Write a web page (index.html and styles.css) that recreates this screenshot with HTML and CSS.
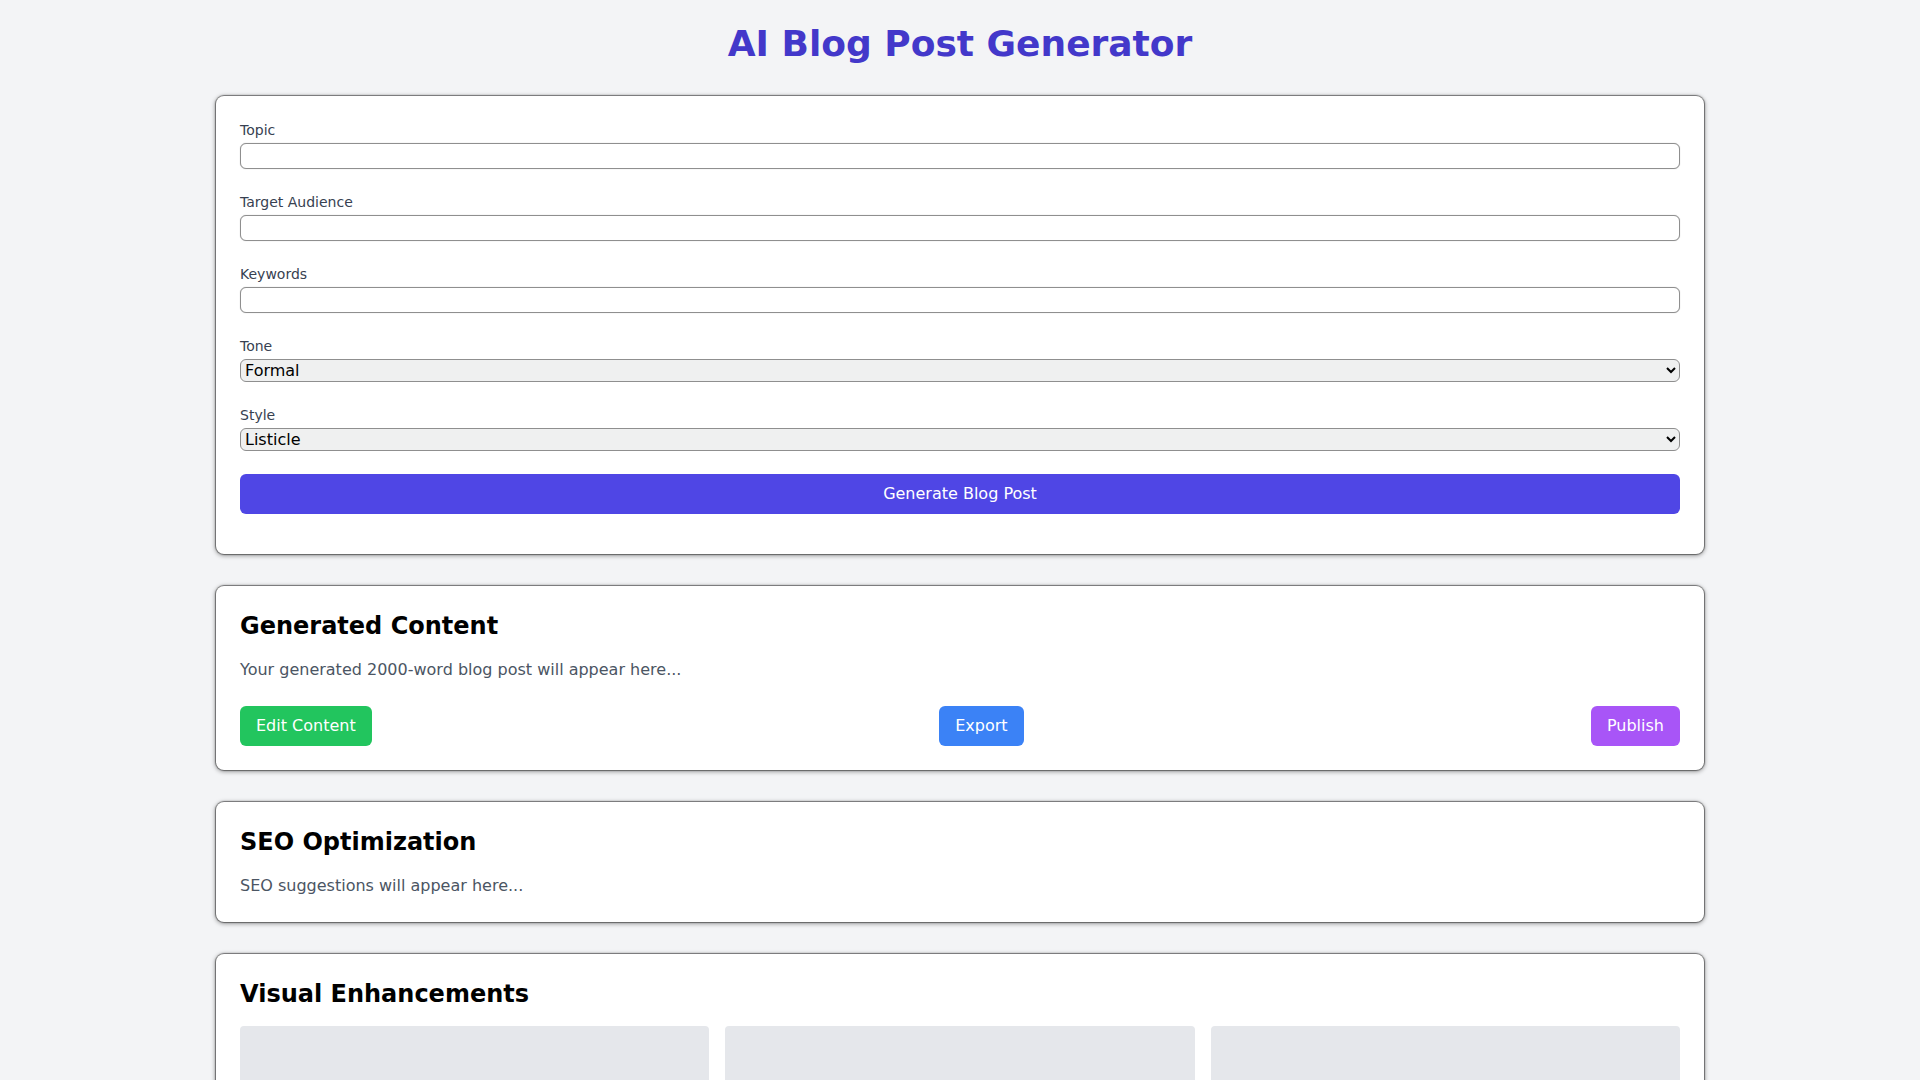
FILE: index.html
```html
<!DOCTYPE html>
<html lang="en">
<head>
<meta charset="utf-8">
<title>AI Blog Post Generator</title>
<link rel="stylesheet" href="styles.css">
</head>
<body>
<main class="container">
  <h1 class="title">AI Blog Post Generator</h1>

  <section class="card form-card">
    <div class="field">
      <label class="label">Topic</label>
      <input class="input" type="text">
    </div>
    <div class="field">
      <label class="label">Target Audience</label>
      <input class="input" type="text">
    </div>
    <div class="field">
      <label class="label">Keywords</label>
      <input class="input" type="text">
    </div>
    <div class="field">
      <label class="label">Tone</label>
      <select class="select"><option>Formal</option><option>Casual</option></select>
    </div>
    <div class="field">
      <label class="label">Style</label>
      <select class="select"><option>Listicle</option><option>How-to</option></select>
    </div>
    <button class="btn btn-primary">Generate Blog Post</button>
  </section>

  <section class="card">
    <h2 class="card-title">Generated Content</h2>
    <p class="muted">Your generated 2000-word blog post will appear here...</p>
    <div class="actions">
      <button class="btn btn-green">Edit Content</button>
      <button class="btn btn-blue">Export</button>
      <button class="btn btn-purple">Publish</button>
    </div>
  </section>

  <section class="card">
    <h2 class="card-title">SEO Optimization</h2>
    <p class="muted no-mb">SEO suggestions will appear here...</p>
  </section>

  <section class="card">
    <h2 class="card-title">Visual Enhancements</h2>
    <div class="tiles">
      <div class="tile"></div>
      <div class="tile"></div>
      <div class="tile"></div>
    </div>
  </section>
</main>
</body>
</html>
```

FILE: styles.css
```css
* { box-sizing: border-box; }

html, body {
  margin: 0;
  padding: 0;
}

body {
  background: #f3f4f6;
  font-family: "DejaVu Sans", sans-serif;
  color: #000;
}

.container {
  max-width: 1536px;
  margin: 0 auto;
  padding: 24px 24px 40px;
}

.title {
  margin: 0 0 32px;
  text-align: center;
  font-size: 36px;
  line-height: 40px;
  font-weight: 700;
  color: #4338ca;
}

.card {
  background: #fff;
  border-radius: 8px;
  padding: 24px;
  margin-bottom: 32px;
  box-shadow: 0 0 1px 1px rgba(0, 0, 0, 0.45), 0 1px 4px 1px rgba(0, 0, 0, 0.35);
}

.form-card {
  padding-bottom: 40px;
}

.field {
  margin-bottom: 23px;
}

.label {
  display: block;
  font-size: 14px;
  line-height: 20px;
  color: #374151;
  margin-bottom: 3px;
}

.input {
  display: block;
  width: 100%;
  height: 26px;
  margin: 0;
  border: 1px solid #8f8f8f;
  border-radius: 6px;
  background: #fff;
  box-shadow: 0 0 1px rgba(0, 0, 0, 0.3);
  font-family: inherit;
  font-size: 16px;
}

.select {
  display: block;
  width: 100%;
  height: 23px;
  margin: 0;
  padding: 0;
  border: 1px solid #8f8f8f;
  border-radius: 6px;
  background-color: #eff0f0;
  color: #000;
  font-family: inherit;
  font-size: 16px;
}

.btn {
  border: none;
  border-radius: 6px;
  height: 40px;
  padding: 0 16px;
  font-family: inherit;
  font-size: 16px;
  line-height: 24px;
  color: #fff;
  cursor: pointer;
}

.btn-primary {
  display: block;
  width: 100%;
  background: #4f46e5;
  margin: 0;
}

.btn-green { background: #22c55e; }
.btn-blue { background: #3b82f6; }
.btn-purple { background: #a855f7; }

.card-title {
  margin: 0 0 16px;
  font-size: 24px;
  line-height: 32px;
  font-weight: 700;
}

.muted {
  margin: 0 0 24px;
  font-size: 16px;
  line-height: 24px;
  color: #4b5563;
}

.muted.no-mb { margin-bottom: 0; }

.actions {
  display: flex;
  justify-content: space-between;
}

.tiles {
  display: grid;
  grid-template-columns: repeat(3, 1fr);
  gap: 16px;
}

.tile {
  height: 192px;
  background: #e5e7eb;
  border-radius: 4px;
}
```
